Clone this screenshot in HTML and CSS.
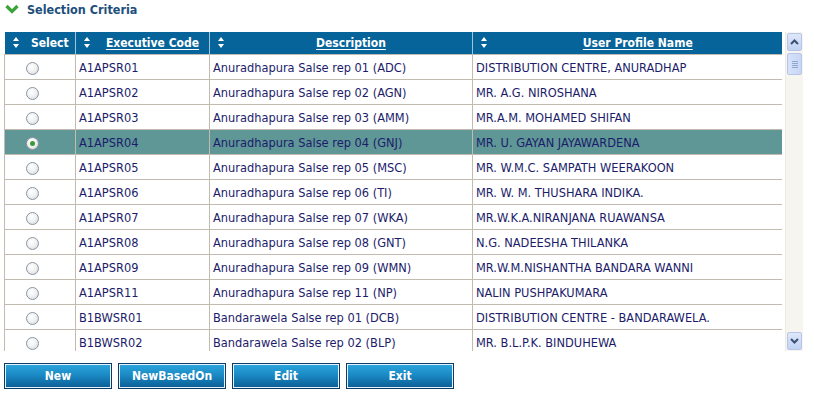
FILE: index.html
```html
<!DOCTYPE html>
<html>
<head>
<meta charset="utf-8">
<link rel="stylesheet" href="styles.css">
</head>
<body>
<div class="page">
  <div class="title">
    <svg class="chev" width="14" height="12" viewBox="0 0 14 12"><polyline points="1.5,3 7,8.5 12.5,3" fill="none" stroke="#3aa33a" stroke-width="3.2"/></svg>
    <span>Selection Criteria</span>
  </div>
  <div class="grid">
    <div class="viewport">
      <table class="tbl">
        <colgroup><col class="c1"><col class="c2"><col class="c3"><col class="c4"></colgroup>
        <thead>
          <tr>
            <th><span class="sort"></span><span class="hl plain">Select</span></th>
            <th><span class="sort"></span><span class="hl">Executive Code</span></th>
            <th><span class="sort"></span><span class="hl">Description</span></th>
            <th><span class="sort"></span><span class="hl">User Profile Name</span></th>
          </tr>
        </thead>
        <tbody>
          <tr><td class="rc"><span class="radio"></span></td><td>A1APSR01</td><td>Anuradhapura Salse rep 01 (ADC)</td><td>DISTRIBUTION CENTRE, ANURADHAP</td></tr>
          <tr><td class="rc"><span class="radio"></span></td><td>A1APSR02</td><td>Anuradhapura Salse rep 02 (AGN)</td><td>MR. A.G. NIROSHANA</td></tr>
          <tr><td class="rc"><span class="radio"></span></td><td>A1APSR03</td><td>Anuradhapura Salse rep 03 (AMM)</td><td>MR.A.M. MOHAMED SHIFAN</td></tr>
          <tr class="sel"><td class="rc"><span class="radio on"></span></td><td>A1APSR04</td><td>Anuradhapura Salse rep 04 (GNJ)</td><td>MR. U. GAYAN JAYAWARDENA</td></tr>
          <tr><td class="rc"><span class="radio"></span></td><td>A1APSR05</td><td>Anuradhapura Salse rep 05 (MSC)</td><td>MR. W.M.C. SAMPATH WEERAKOON</td></tr>
          <tr><td class="rc"><span class="radio"></span></td><td>A1APSR06</td><td>Anuradhapura Salse rep 06 (TI)</td><td>MR. W. M. THUSHARA INDIKA.</td></tr>
          <tr><td class="rc"><span class="radio"></span></td><td>A1APSR07</td><td>Anuradhapura Salse rep 07 (WKA)</td><td>MR.W.K.A.NIRANJANA RUAWANSA</td></tr>
          <tr><td class="rc"><span class="radio"></span></td><td>A1APSR08</td><td>Anuradhapura Salse rep 08 (GNT)</td><td>N.G. NADEESHA THILANKA</td></tr>
          <tr><td class="rc"><span class="radio"></span></td><td>A1APSR09</td><td>Anuradhapura Salse rep 09 (WMN)</td><td>MR.W.M.NISHANTHA BANDARA WANNI</td></tr>
          <tr><td class="rc"><span class="radio"></span></td><td>A1APSR11</td><td>Anuradhapura Salse rep 11 (NP)</td><td>NALIN PUSHPAKUMARA</td></tr>
          <tr><td class="rc"><span class="radio"></span></td><td>B1BWSR01</td><td>Bandarawela Salse rep 01 (DCB)</td><td>DISTRIBUTION CENTRE - BANDARAWELA.</td></tr>
          <tr><td class="rc"><span class="radio"></span></td><td>B1BWSR02</td><td>Bandarawela Salse rep 02 (BLP)</td><td>MR. B.L.P.K. BINDUHEWA</td></tr>
        </tbody>
      </table>
    </div>
    <div class="scrollbar">
      <div class="sbtn"><svg width="9" height="6" viewBox="0 0 9 6"><polyline points="1,5 4.5,1.5 8,5" fill="none" stroke="#3b4f75" stroke-width="2"/></svg></div>
      <div class="thumb"><span></span><span></span><span></span><span></span></div>
      <div class="track"></div>
      <div class="sbtn"><svg width="9" height="6" viewBox="0 0 9 6"><polyline points="1,1 4.5,4.5 8,1" fill="none" stroke="#3b4f75" stroke-width="2"/></svg></div>
    </div>
  </div>
  <div class="buttons">
    <button class="btn">New</button>
    <button class="btn">NewBasedOn</button>
    <button class="btn">Edit</button>
    <button class="btn">Exit</button>
  </div>
</div>
</body>
</html>
```

FILE: styles.css
```css
html, body {
  margin: 0;
  padding: 0;
  background: #ffffff;
}
body {
  font-family: "DejaVu Sans Condensed", "DejaVu Sans", sans-serif;
  font-size: 12px;
  color: #1c1c6b;
}
.page {
  padding: 2px 0 0 4px;
}
.title {
  display: flex;
  align-items: center;
  height: 14px;
  gap: 8px;
  padding-left: 1px;
  font-weight: bold;
  font-size: 12.5px;
  color: #1d4f7c;
}
.chev { display: block; }
.grid {
  display: flex;
  gap: 3px;
  margin-top: 16px;
}
.viewport {
  width: 778px;
  height: 319px;
  overflow: hidden;
}
.tbl {
  border-collapse: collapse;
  table-layout: fixed;
  width: 778px;
}
.c1 { width: 71px; }
.c2 { width: 134px; }
.c3 { width: 263px; }
.c4 { width: 310px; }
.tbl th {
  background: #07649a;
  color: #ffffff;
  height: 22px;
  padding: 0 0 0 20px;
  font-weight: bold;
  font-size: 12px;
  position: relative;
  border-left: 1px solid #9fc3d9;
  text-align: center;
}
.tbl th:first-child { border-left: none; }
.hl {
  text-decoration: underline;
  text-underline-offset: 2px;
}
.hl.plain { text-decoration: none; }
.sort {
  position: absolute;
  left: 8px;
  top: 5px;
  width: 7px;
  height: 11px;
}
.sort::before, .sort::after {
  content: "";
  position: absolute;
  left: 0;
  border-left: 3.5px solid transparent;
  border-right: 3.5px solid transparent;
}
.sort::before { top: 0; border-bottom: 4px solid #ffffff; }
.sort::after { bottom: 0; border-top: 4px solid #ffffff; }
.tbl td {
  height: 24px;
  padding: 0 0 0 3px;
  border: 1px solid #c2bbb0;
  white-space: nowrap;
  overflow: hidden;
  font-size: 12.7px;
}
.tbl td.rc { text-align: center; padding: 0; }
.tbl tr.sel td { background: #5f9696; }
.radio {
  display: inline-block;
  width: 11px;
  height: 11px;
  border-radius: 50%;
  border: 1px solid #8a96a3;
  background: radial-gradient(circle at 40% 35%, #ffffff 0%, #f2f2f2 45%, #cfd3d6 100%);
  vertical-align: middle;
  position: relative;
  left: -8px;
}
.radio.on::after {
  content: "";
  position: absolute;
  left: 3px;
  top: 3px;
  width: 5px;
  height: 5px;
  border-radius: 50%;
  background: #3c9a3c;
}
.scrollbar {
  width: 17px;
  height: 319px;
  display: flex;
  flex-direction: column;
  background: #f6f5f0;
  border-left: 1px solid #ecebe6;
}
.sbtn {
  height: 16px;
  margin: 1px;
  border: 1px solid #b7c6e6;
  border-radius: 2px;
  background: linear-gradient(#dfe8fb, #c2d2f3);
  display: flex;
  align-items: center;
  justify-content: center;
}
.thumb {
  height: 20px;
  margin: 1px;
  border: 1px solid #b7c6e6;
  border-radius: 2px;
  background: linear-gradient(90deg, #d7e2fa, #c8d7f6);
  display: flex;
  flex-direction: column;
  align-items: center;
  justify-content: center;
  gap: 1px;
}
.thumb span {
  display: block;
  width: 6px;
  height: 1px;
  background: #8fa5d4;
}
.track { flex: 1; }
.buttons {
  display: flex;
  gap: 6px;
  margin-top: 12px;
}
.btn {
  width: 108px;
  height: 26px;
  padding: 0;
  border: 1px solid #0a3c66;
  box-shadow: inset 0 0 0 1px #e7f3fb;
  background: linear-gradient(#2ea6dd 0%, #1b8ac5 45%, #0b5c93 100%);
  color: #ffffff;
  font-family: "DejaVu Sans Condensed", "DejaVu Sans", sans-serif;
  font-weight: bold;
  font-size: 12px;
  cursor: pointer;
}
```
